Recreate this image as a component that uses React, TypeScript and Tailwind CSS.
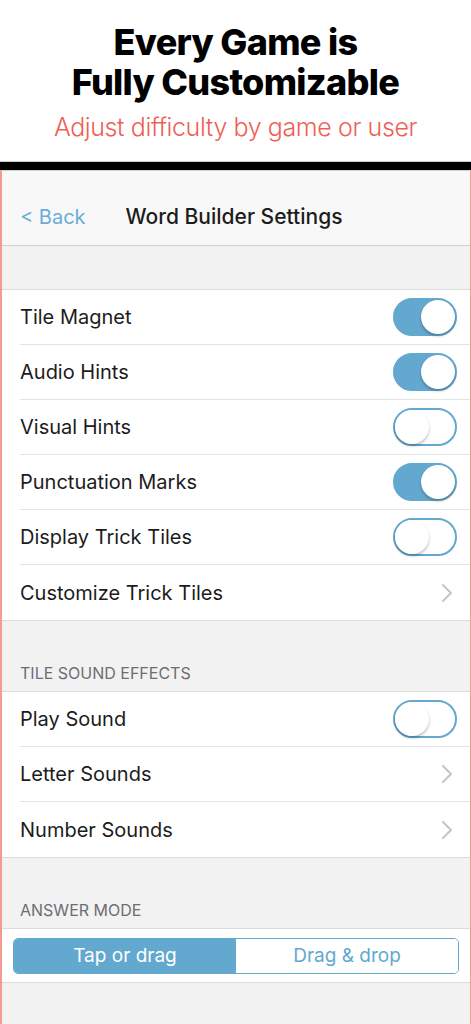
import { ChevronRight } from 'lucide-react';

type Row =
  | { label: string; kind: 'toggle'; on: boolean }
  | { label: string; kind: 'link' };

const general: Row[] = [
  { label: 'Tile Magnet', kind: 'toggle', on: true },
  { label: 'Audio Hints', kind: 'toggle', on: true },
  { label: 'Visual Hints', kind: 'toggle', on: false },
  { label: 'Punctuation Marks', kind: 'toggle', on: true },
  { label: 'Display Trick Tiles', kind: 'toggle', on: false },
  { label: 'Customize Trick Tiles', kind: 'link' },
];

const sound: Row[] = [
  { label: 'Play Sound', kind: 'toggle', on: false },
  { label: 'Letter Sounds', kind: 'link' },
  { label: 'Number Sounds', kind: 'link' },
];

function Toggle({ on }: { on: boolean }) {
  return (
    <div
      className={`relative w-[64px] h-[38px] rounded-full border-2 border-[#63a8cf] ${
        on ? 'bg-[#63a8cf]' : 'bg-white'
      }`}
    >
      <div
        className={`absolute top-[0px] w-[34px] h-[34px] rounded-full bg-white shadow-[0_2px_3px_rgba(0,0,0,0.25)] ${
          on ? 'right-[0px]' : 'left-[0px]'
        }`}
      />
    </div>
  );
}

function Group({ rows }: { rows: Row[] }) {
  return (
    <div className="bg-white border-y border-[#dcdcdc]">
      {rows.map((r, i) => (
        <div key={r.label} className="pl-[18px]">
          <div
            className={`h-[55px] flex items-center justify-between pr-[13px] ${
              i < rows.length - 1 ? 'border-b border-[#e4e4e4]' : ''
            }`}
          >
            <span className="text-[20px] text-[#1c1c1c]">{r.label}</span>
            {r.kind === 'toggle' ? (
              <Toggle on={r.on} />
            ) : (
              <ChevronRight className="w-[32px] h-[32px] text-[#c4c4c8] mr-[-6px]" strokeWidth={1.5} />
            )}
          </div>
        </div>
      ))}
    </div>
  );
}

export default function App() {
  return (
    <div className="min-h-screen bg-white font-['Inter',sans-serif] overflow-hidden">
      {/* Promo header */}
      <header className="h-[161px] flex flex-col items-center pt-[22px]">
        <h1 className="text-[36px] leading-[40px] font-extrabold text-black text-center tracking-[-0.7px]">
          Every Game is
          <br />
          Fully Customizable
        </h1>
        <p className="mt-[10px] text-[25px] leading-[30px] font-light text-[#ef5f55] tracking-[-0.4px]">
          Adjust difficulty by game or user
        </p>
      </header>
      <div className="h-[9px] bg-black border-t border-[#c8c8c8]" />

      {/* Device screen */}
      <div className="border-l-2 border-r border-[#f29b95] bg-[#f2f2f2] min-h-[855px] border-t border-t-[#d0d0d0]">
        <nav className="h-[75px] bg-[#f8f8f8] border-b border-[#cfcfcf] flex items-center pt-[18px]">
          <span className="ml-[18px] text-[20px] text-[#6aaed6]">&lt; Back</span>
          <span className="ml-[40px] text-[21px] font-medium text-[#1c1c1c]">Word Builder Settings</span>
        </nav>

        <div className="h-[43px]" />
        <Group rows={general} />

        <div className="h-[70px] flex items-end pl-[18px] pb-[6px]">
          <span className="text-[16px] text-[#6d6d72]">TILE SOUND EFFECTS</span>
        </div>
        <Group rows={sound} />

        <div className="h-[70px] flex items-end pl-[18px] pb-[6px]">
          <span className="text-[16px] text-[#6d6d72]">ANSWER MODE</span>
        </div>
        <div className="bg-white border-y border-[#dcdcdc] h-[55px] flex items-center px-[11px]">
          <div className="flex w-full h-[36px] rounded-[5px] border border-[#63a8cf] overflow-hidden text-[19px]">
            <div className="flex-1 bg-[#63a8cf] text-white flex items-center justify-center pt-[2px]">Tap or drag</div>
            <div className="flex-1 bg-white text-[#63a8cf] flex items-center justify-center pt-[2px]">Drag &amp; drop</div>
          </div>
        </div>
      </div>
    </div>
  );
}
